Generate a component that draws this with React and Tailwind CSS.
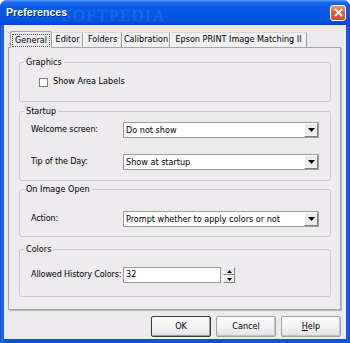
import React from "react";

const font = { fontFamily: '"DejaVu Sans Condensed", "Liberation Sans", sans-serif' };

function Arrow({ up }) {
  return (
    <svg width="5" height="3" viewBox="0 0 5 3">
      {up ? <path d="M0 3 L5 3 L2.5 0 Z" fill="#000" /> : <path d="M0 0 L5 0 L2.5 3 Z" fill="#000" />}
    </svg>
  );
}

function Select({ value }) {
  return (
    <div className="w-[196px] h-[16px] bg-white border border-[#9c9c9c] flex items-center">
      <span className="flex-1 pl-[2px] text-[9px] leading-[14px] text-black truncate">{value}</span>
      <div className="w-[14px] h-[14px] bg-[#ecebee] border border-t-white border-l-white border-r-[#808080] border-b-[#808080] flex items-center justify-center">
        <svg width="7" height="4" viewBox="0 0 7 4">
          <path d="M0 0 L7 0 L3.5 4 Z" fill="#000" />
        </svg>
      </div>
    </div>
  );
}

function Group({ title, className, children }) {
  return (
    <fieldset className={`border border-[#c9c9c9] rounded-[3px] ${className}`}>
      <legend className="ml-[4px] px-[2px] text-[9px] leading-[12px] text-black">{title}</legend>
      {children}
    </fieldset>
  );
}

function Row({ label, className, children }) {
  return (
    <div className={`flex items-center h-[16px] ml-[11px] ${className}`}>
      <span className="w-[92px] shrink-0 text-[9px] tracking-[-0.15px] text-black whitespace-nowrap">{label}</span>
      {children}
    </div>
  );
}

function Tab({ label, w, selected }) {
  if (selected) {
    return (
      <div className={`${w} h-[17px] -mb-px relative z-10 bg-[#edebee] border border-b-0 border-[#a5a5a5] rounded-t-[2px] flex items-center justify-center`}>
        <span className="px-[2px] leading-[11px] text-[9px] text-black border border-dotted border-[#555]">{label}</span>
      </div>
    );
  }
  return (
    <div className={`${w} h-[15px] bg-[#f1f0f2] border-t border-t-[#d8d8d8] border-l border-l-white border-r border-r-[#9a9a9a] flex items-center justify-center`}>
      <span className="text-[9px] text-black whitespace-nowrap">{label}</span>
    </div>
  );
}

function Btn({ children, def }) {
  return (
    <div
      className={`w-[60px] h-[21px] rounded-[2px] flex items-center justify-center text-[9px] text-black bg-[linear-gradient(180deg,#fbfbfb_0%,#f0eff1_60%,#e2e1e4_100%)] ${
        def ? "border border-[#3c3c3c] shadow-[inset_-1px_-1px_0_#9a9a9a]" : "border border-[#a3a3a3] shadow-[inset_-1px_-1px_0_#c4c4c4]"
      }`}
    >
      {children}
    </div>
  );
}

export default function App() {
  return (
    <div className="w-[350px] h-[343px] flex flex-col rounded-t-[7px] overflow-hidden bg-[linear-gradient(90deg,#0a47d0_0px,#2a6ff0_2px,#0b52dc_4px,#0b52dc_346px,#1b5ee8_348px,#0840c0_350px)]" style={font}>
      {/* Title bar */}
      <div className="h-[25px] shrink-0 relative flex items-center pl-[6px] pr-[4px] bg-[linear-gradient(180deg,#5a9cfa_0%,#1d68ee_10%,#0a5ae6_30%,#0558e4_60%,#0452de_85%,#0245c8_100%)]">
        <span className="text-[10.5px] font-bold text-white tracking-[0.1px] [text-shadow:1px_1px_0_#0a2e8a]" style={{ fontFamily: '"Liberation Sans", sans-serif' }}>
          Preferences
        </span>
        <span className="absolute left-[62px] top-[4px] text-[16px] tracking-[2px] text-white/10 pointer-events-none" style={{ fontFamily: '"Liberation Serif", serif' }}>
          SOFTPEDIA
        </span>
        <div className="ml-auto w-[16px] h-[16px] rounded-[3px] border border-white bg-[linear-gradient(180deg,#f09070_0%,#e2603f_45%,#cf4a2b_100%)] flex items-center justify-center">
          <svg width="9" height="9" viewBox="0 0 9 9">
            <path d="M1.5 1.5 L7.5 7.5 M7.5 1.5 L1.5 7.5" stroke="#fff" strokeWidth="1.8" strokeLinecap="square" />
          </svg>
        </div>
      </div>

      {/* Body */}
      <div className="flex-1 mx-[4px] mb-[4px] bg-[#edebee] flex flex-col pl-[4px] pr-[5px] pt-[5px]">
        {/* Tabs */}
        <div className="flex items-end h-[17px] ml-[2px]">
          <Tab label="General" w="w-[42px]" selected />
          <Tab label="Editor" w="w-[31px]" />
          <Tab label="Folders" w="w-[39px]" />
          <Tab label="Calibration" w="w-[48px]" />
          <Tab label="Epson PRINT Image Matching II" w="w-[137px]" />
        </div>

        {/* Panel */}
        <div className="h-[263px] border border-[#a5a5a5] shadow-[1px_1px_0_#b8b8b8] flex flex-col pl-[10px] pr-[9px]">
          <Group title="Graphics" className="h-[46px] mt-[8px]">
            <div className="flex items-center h-[14px] mt-[7px] ml-[19px] gap-[5px]">
              <div className="w-[9px] h-[9px] bg-white border border-[#7a7a7a]" />
              <span className="text-[9px] text-black">Show Area Labels</span>
            </div>
          </Group>

          <Group title="Startup" className="h-[76px] mt-[3px]">
            <Row label="Welcome screen:" className="mt-[5px]">
              <Select value="Do not show" />
            </Row>
            <Row label="Tip of the Day:" className="mt-[16px]">
              <Select value="Show at startup" />
            </Row>
          </Group>

          <Group title="On Image Open" className="h-[54px] mt-[2px]">
            <Row label="Action:" className="mt-[16px]">
              <Select value="Prompt whether to apply colors or not" />
            </Row>
          </Group>

          <Group title="Colors" className="h-[54px] mt-[6px]">
            <Row label="Allowed History Colors:" className="mt-[12px]">
              <div className="w-[98px] h-[16px] bg-white border border-[#9c9c9c] flex items-center">
                <span className="pl-[2px] text-[9px] text-black">32</span>
              </div>
              <div className="ml-[2px] w-[12px] h-[16px] flex flex-col">
                <div className="flex-1 bg-[#ecebee] border border-t-white border-l-white border-r-[#808080] border-b-[#808080] flex items-center justify-center">
                  <Arrow up />
                </div>
                <div className="flex-1 bg-[#ecebee] border border-t-white border-l-white border-r-[#808080] border-b-[#808080] flex items-center justify-center">
                  <Arrow />
                </div>
              </div>
            </Row>
          </Group>
        </div>

        {/* Buttons */}
        <div className="flex justify-end gap-[5px] mt-[6px]">
          <Btn def>OK</Btn>
          <Btn>Cancel</Btn>
          <Btn>
            <span>
              <span className="underline">H</span>elp
            </span>
          </Btn>
        </div>
      </div>
    </div>
  );
}
